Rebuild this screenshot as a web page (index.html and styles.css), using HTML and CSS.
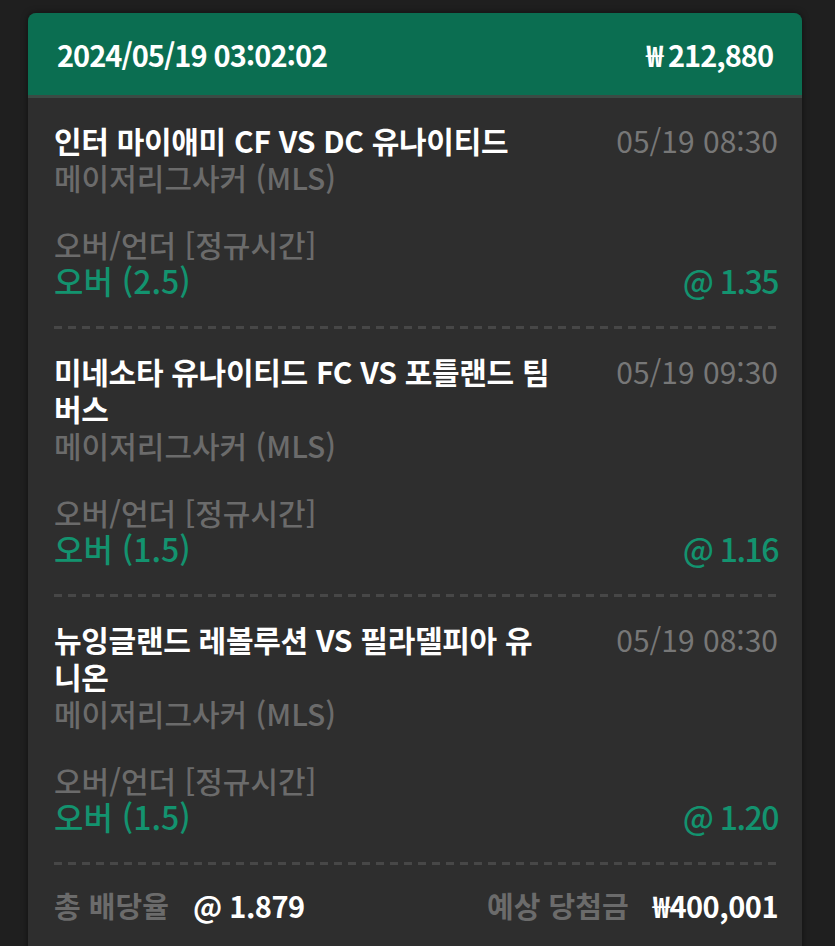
FILE: index.html
```html
<!DOCTYPE html>
<html lang="ko">

<head>
    <meta charset="UTF-8">
    <meta name="viewport" content="width=device-width, initial-scale=1.0">
    <title>베팅 내역</title>
    <link rel="stylesheet" href="styles.css">
</head>

<body>

    <div class="slip">
        <div class="slip-head">
            <span>2024/05/19 03:02:02</span>
            <span>₩ 212,880</span>
        </div>

        <div class="slip-body">
            <div class="bet">
                <div class="bet-top">
                    <div class="match">인터 마이애미 CF VS DC 유나이티드</div>
                    <div class="kickoff">05/19 08:30</div>
                </div>
                <div class="league">메이저리그사커 (MLS)</div>
                <div class="market">오버/언더 [정규시간]</div>
                <div class="bet-pick">
                    <span>오버 (2.5)</span>
                    <span class="odds">@ 1.35</span>
                </div>
            </div>

            <div class="bet">
                <div class="bet-top">
                    <div class="match">미네소타 유나이티드 FC VS 포틀랜드 팀버스</div>
                    <div class="kickoff">05/19 09:30</div>
                </div>
                <div class="league">메이저리그사커 (MLS)</div>
                <div class="market">오버/언더 [정규시간]</div>
                <div class="bet-pick">
                    <span>오버 (1.5)</span>
                    <span class="odds">@ 1.16</span>
                </div>
            </div>

            <div class="bet">
                <div class="bet-top">
                    <div class="match">뉴잉글랜드 레볼루션 VS 필라델피아 유니온</div>
                    <div class="kickoff">05/19 08:30</div>
                </div>
                <div class="league">메이저리그사커 (MLS)</div>
                <div class="market">오버/언더 [정규시간]</div>
                <div class="bet-pick">
                    <span>오버 (1.5)</span>
                    <span class="odds">@ 1.20</span>
                </div>
            </div>

            <div class="slip-foot">
                <div>
                    <span class="foot-label">총 배당율</span>
                    <span class="foot-value">@ 1.879</span>
                </div>
                <div>
                    <span class="foot-label">예상 당첨금</span>
                    <span class="foot-value">₩400,001</span>
                </div>
            </div>
        </div>
    </div>

</body>

</html>
```

FILE: styles.css
```css
body {
    font-family: 'Noto Sans CJK KR', 'Noto Sans', sans-serif;
    background-color: #1f1f1f;
    margin: 0;
    padding: 0;
}

/* Bet slip card */
.slip {
    margin: 13px 33px 0 28px;
    background-color: #2e2e2e;
    border-radius: 8px;
    box-shadow: 0 0 6px rgba(0, 0, 0, 0.5);
    min-height: 960px;
}

.slip-head {
    display: flex;
    justify-content: space-between;
    align-items: center;
    height: 82px;
    padding: 0 29px;
    background-color: #0b6e51;
    border-radius: 8px 8px 0 0;
    border-bottom: 3px solid #3b4a44;
    color: white;
    font-size: 29px;
    font-weight: 700;
    letter-spacing: -1px;
}

.slip-body {
    padding: 0 24px 0 26px;
}

.bet {
    padding: 24px 0 31px;
    background-image: repeating-linear-gradient(to right, #474747 0 8px, transparent 8px 14px);
    background-size: 100% 3px;
    background-position: bottom left;
    background-repeat: no-repeat;
    line-height: 37px;
}

.bet + .bet {
    padding-top: 24px;
}

.bet-top {
    display: flex;
    justify-content: space-between;
    align-items: flex-start;
}

.match {
    max-width: 498px;
    color: white;
    font-size: 30px;
    font-weight: 700;
    letter-spacing: -0.3px;
}

.kickoff {
    color: #777;
    font-size: 30px;
}

.league {
    color: #6b6b6b;
    font-size: 30px;
    font-weight: 500;
    margin-bottom: 30px;
}

.market {
    color: #6b6b6b;
    font-size: 30px;
    font-weight: 500;
}

.bet-pick {
    display: flex;
    justify-content: space-between;
    color: #13936f;
    font-size: 32px;
    font-weight: 500;
    line-height: 35px;
}

.odds {
    letter-spacing: -1.5px;
}

.slip-foot {
    display: flex;
    justify-content: space-between;
    align-items: center;
    padding-top: 19px;
    font-size: 29px;
    font-weight: 700;
}

.foot-label {
    color: #6b6b6b;
    margin-right: 16px;
}

.foot-value {
    color: white;
    letter-spacing: -0.5px;
}
```
